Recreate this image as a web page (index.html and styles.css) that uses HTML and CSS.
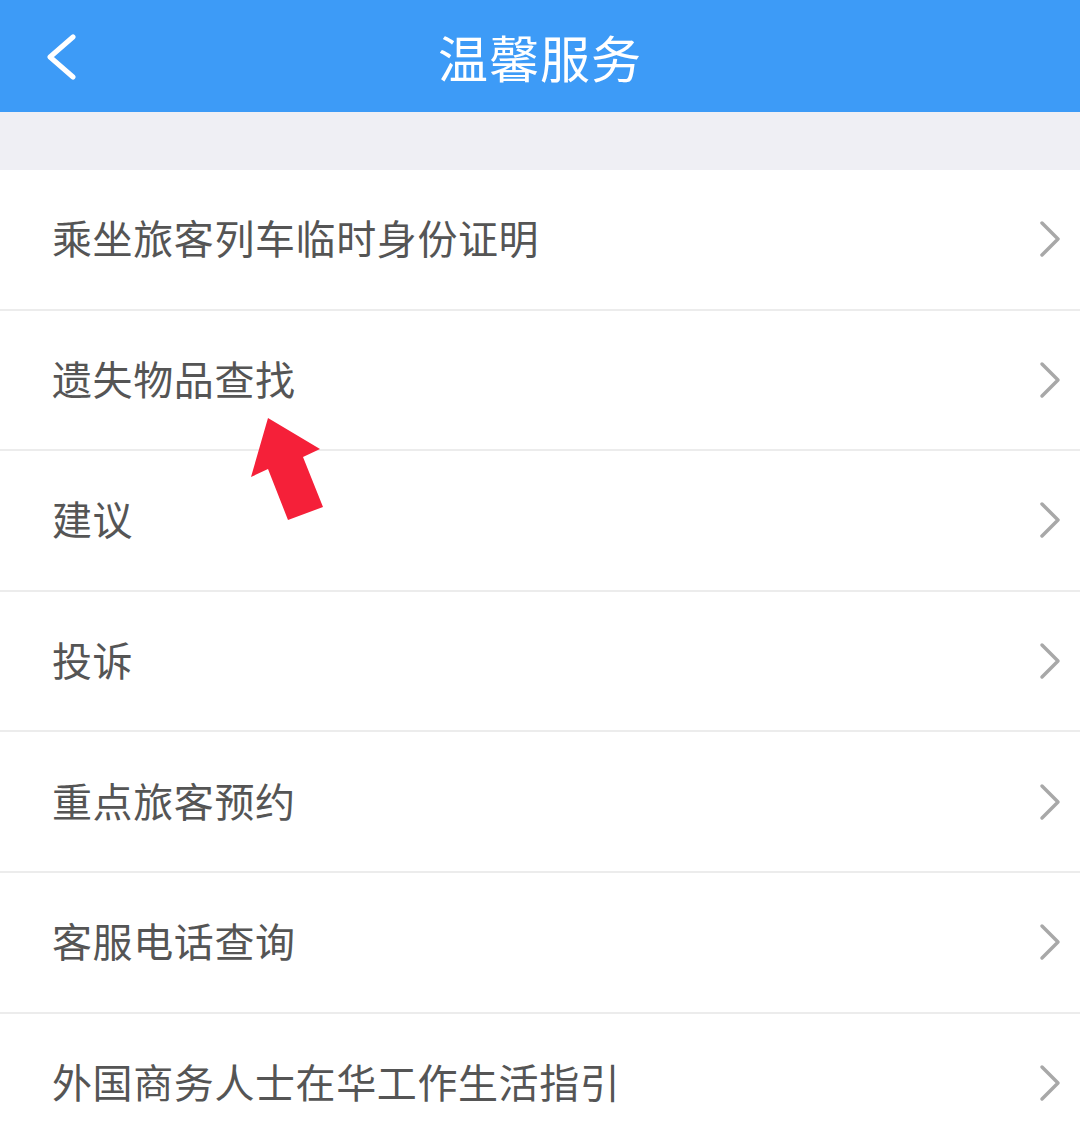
FILE: index.html
```html
<!DOCTYPE html>
<html lang="zh-CN">
<head>
<meta charset="utf-8">
<title>温馨服务</title>
<link rel="stylesheet" href="styles.css">
</head>
<body>
<div class="page">
  <header class="topbar">
    <svg class="back" width="40" height="60" viewBox="0 0 40 60"><polyline points="33,17 10,37 33,57" fill="none" stroke="#fff" stroke-width="5" stroke-linecap="round" stroke-linejoin="round"/></svg>
    <h1 class="title">温馨服务</h1>
  </header>
  <div class="gap"></div>
  <ul class="list">
    <li class="row"><span class="label">乘坐旅客列车临时身份证明</span><svg class="chev" width="24" height="40" viewBox="0 0 24 40"><polyline points="4,4 20,20 4,36" fill="none" stroke="#a8a8a8" stroke-width="3.5" stroke-linecap="round" stroke-linejoin="round"/></svg></li>
    <li class="row"><span class="label">遗失物品查找</span><svg class="chev" width="24" height="40" viewBox="0 0 24 40"><polyline points="4,4 20,20 4,36" fill="none" stroke="#a8a8a8" stroke-width="3.5" stroke-linecap="round" stroke-linejoin="round"/></svg></li>
    <li class="row"><span class="label">建议</span><svg class="chev" width="24" height="40" viewBox="0 0 24 40"><polyline points="4,4 20,20 4,36" fill="none" stroke="#a8a8a8" stroke-width="3.5" stroke-linecap="round" stroke-linejoin="round"/></svg></li>
    <li class="row"><span class="label">投诉</span><svg class="chev" width="24" height="40" viewBox="0 0 24 40"><polyline points="4,4 20,20 4,36" fill="none" stroke="#a8a8a8" stroke-width="3.5" stroke-linecap="round" stroke-linejoin="round"/></svg></li>
    <li class="row"><span class="label">重点旅客预约</span><svg class="chev" width="24" height="40" viewBox="0 0 24 40"><polyline points="4,4 20,20 4,36" fill="none" stroke="#a8a8a8" stroke-width="3.5" stroke-linecap="round" stroke-linejoin="round"/></svg></li>
    <li class="row"><span class="label">客服电话查询</span><svg class="chev" width="24" height="40" viewBox="0 0 24 40"><polyline points="4,4 20,20 4,36" fill="none" stroke="#a8a8a8" stroke-width="3.5" stroke-linecap="round" stroke-linejoin="round"/></svg></li>
    <li class="row"><span class="label">外国商务人士在华工作生活指引</span><svg class="chev" width="24" height="40" viewBox="0 0 24 40"><polyline points="4,4 20,20 4,36" fill="none" stroke="#a8a8a8" stroke-width="3.5" stroke-linecap="round" stroke-linejoin="round"/></svg></li>
  </ul>
  <svg class="pointer" width="80" height="110" viewBox="0 0 80 110"><polygon points="18,2 70,33 53,41 73,91 38,104 18,53 1,61" fill="#f52039"/></svg>
</div>
</body>
</html>
```
FILE: styles.css
```css
html, body {
  margin: 0;
  padding: 0;
  background: #ffffff;
}
body {
  font-family: "Noto Sans CJK SC", "Noto Sans", sans-serif;
}
.page {
  position: relative;
  width: 1080px;
  height: 1146px;
  overflow: hidden;
  background: #ffffff;
}
.topbar {
  position: relative;
  height: 112px;
  background: #3d9bf7;
  display: flex;
  align-items: center;
  justify-content: center;
}
.back {
  position: absolute;
  left: 40px;
  top: 20px;
}
.title {
  margin: 0;
  color: #ffffff;
  font-size: 50px;
  font-weight: 400;
  letter-spacing: 1px;
  line-height: 1;
}
.gap {
  height: 58px;
  background: #efeff4;
}
.list {
  list-style: none;
  margin: 0;
  padding: 0;
}
.row {
  box-sizing: border-box;
  height: 140.6px;
  display: flex;
  align-items: center;
  justify-content: space-between;
  padding: 0 18px 0 52px;
  border-bottom: 2px solid #ececec;
}
.label {
  color: #555555;
  font-size: 40px;
  letter-spacing: 0.6px;
  line-height: 1;
  padding-bottom: 4px;
}
.chev {
  display: block;
}
.pointer {
  position: absolute;
  left: 250px;
  top: 416px;
}
```
